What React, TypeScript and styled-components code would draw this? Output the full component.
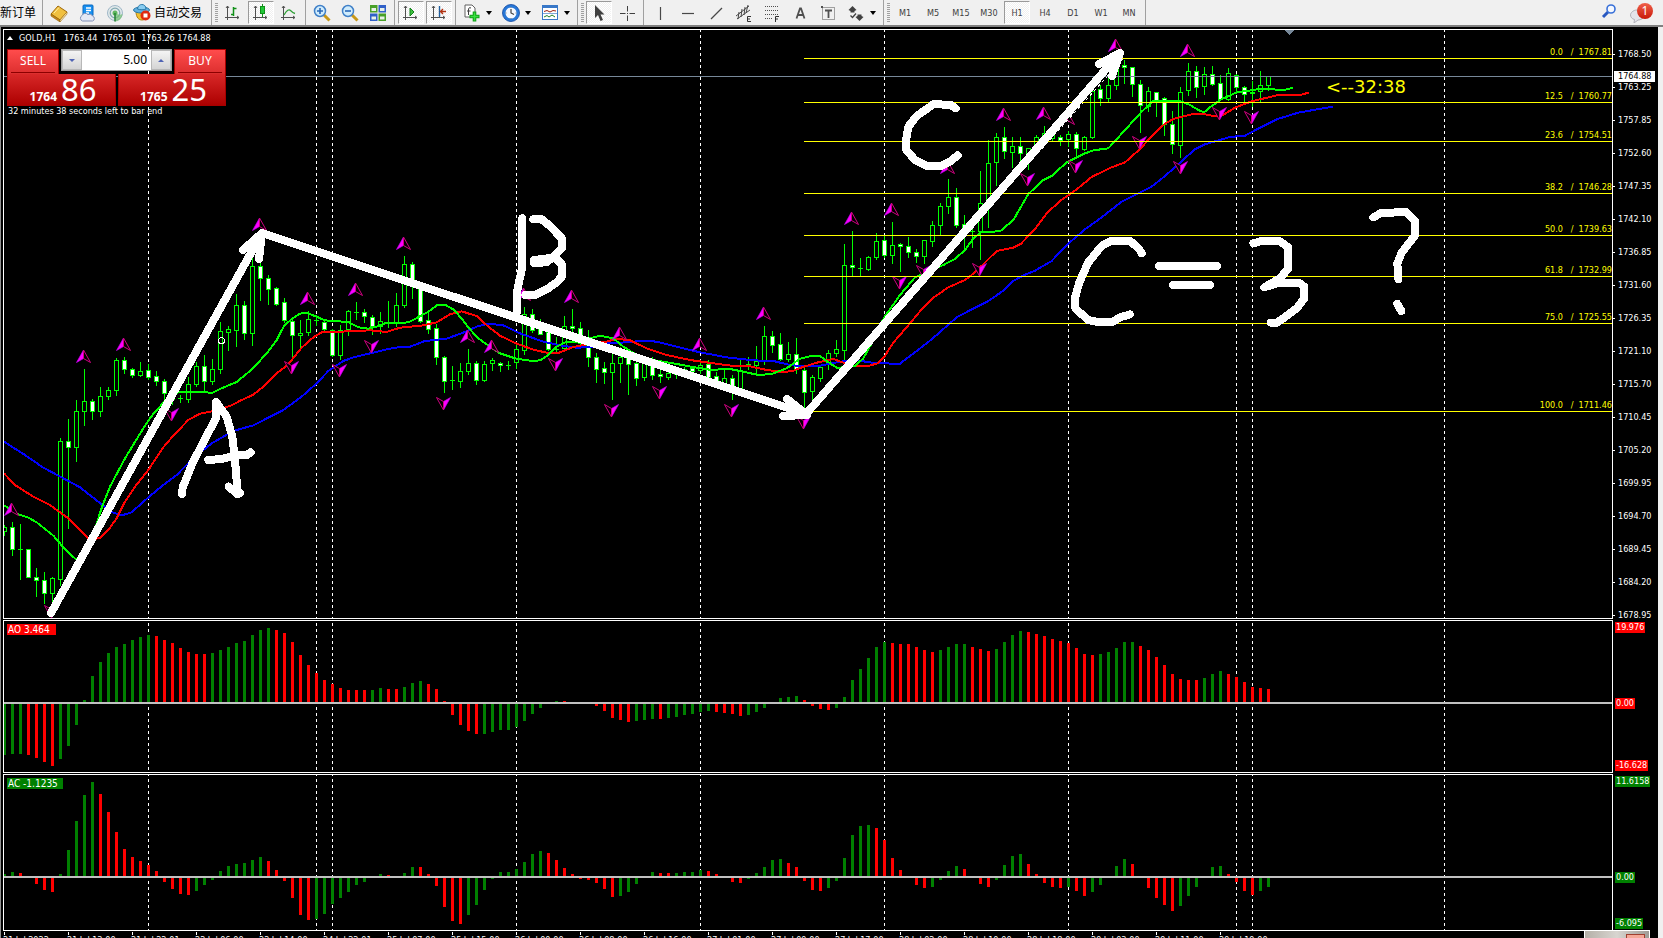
import React from 'react';
import styled, { createGlobalStyle, css } from 'styled-components';

const ui = `"DejaVu Sans Condensed", "DejaVu Sans", "Noto Sans CJK SC", sans-serif`;
const deal = `"Noto Sans", "Open Sans", sans-serif`;
const han = `"Noto Sans CJK SC", "Noto Sans", sans-serif`;

const GlobalStyle = createGlobalStyle`
  * { box-sizing: border-box; }
  body { margin: 0; background: #f0f0f0; font-family: ${ui}; font-size: 9px; line-height: 11px; }
  button, input { font: inherit; margin: 0; padding: 0; border: 0; background: none; color: inherit; }
`;

const Page = styled.div`
  display: flex;
  flex-direction: column;
  height: 100vh;
  overflow: hidden;
`;

/* ---------- toolbar ---------- */

const Toolbar = styled.header`
  display: flex;
  align-items: stretch;
  flex: none;
  height: 27px;
  border-bottom: 2px solid #808080;
  background: #f0f0f0;
  color: #404040;
`;

const Divider = styled.span`
  flex: none;
  width: 1px;
  margin: 0 2px;
  background: #a0a0a0;
`;

const Grip = styled.span`
  flex: none;
  width: 3px;
  margin: 3px 1px;
  background: repeating-linear-gradient(#a0a0a0 0 1px, #f0f0f0 1px 2px);
`;

const Tool = styled.button<{ $pressed?: boolean }>`
  display: flex;
  flex: none;
  align-items: center;
  justify-content: center;
  width: 26px;
  margin: 1px;
  padding-top: 1px;
  border: 1px solid transparent;
  ${(p) =>
    p.$pressed &&
    css`
      border-color: #9a9a9a #fff #fff #9a9a9a;
      background: repeating-conic-gradient(#fff 0 25%, #f0f0f0 0 50%) 0 0 / 2px 2px;
    `}
`;

const DropTool = styled(Tool)`
  width: 37px;
  gap: 5px;
`;

const Caret = styled.span`
  border: 3px solid transparent;
  border-top: 4px solid #000;
  border-bottom: 0;
`;

const TextTool = styled.button<{ $width: number; $indent?: number }>`
  display: flex;
  flex: none;
  align-items: center;
  gap: 3px;
  width: ${(p) => p.$width}px;
  padding-left: ${(p) => p.$indent ?? 0}px;
  padding-bottom: 2px;
  font: 12px/18px ${han};
  color: #000;
  white-space: nowrap;
`;

const ToolbarEnd = styled.div`
  display: flex;
  align-items: center;
  gap: 12px;
  margin-left: auto;
  padding-right: 10px;
`;

const ChatButton = styled.button`
  position: relative;
  display: flex;
  align-items: flex-end;
  width: 24px;
  height: 20px;
`;

const Badge = styled.span`
  position: absolute;
  top: 0;
  right: 0;
  width: 16px;
  height: 16px;
  border-radius: 50%;
  background: linear-gradient(#f0604a, #c81808);
  color: #fff;
  font: 12px/16px ${deal};
  text-align: center;
`;

/* ---------- chart window ---------- */

const Frame = styled.main`
  display: flex;
  flex: 1;
  flex-direction: column;
  gap: 1px;
  min-height: 0;
  margin-right: 5px;
  padding: 2px 0 0 2px;
  border-left: 1px solid #909090;
  background: #000;
  color: #fff;
`;

const Pane = styled.section<{ $height?: number }>`
  display: flex;
  flex: ${(p) => (p.$height ? `0 0 ${p.$height}px` : '1 1 0')};
  min-height: 0;
`;

const Plot = styled.div`
  position: relative;
  flex: 1;
  min-width: 0;
  border: 1px solid #fff;
  overflow: hidden;
`;

const Canvas = styled.svg`
  display: block;
  width: 100%;
  height: 100%;
`;

const FibLabel = styled.text`
  fill: #ffff00;
  text-anchor: end;
  white-space: pre;
`;

const Scale = styled.div`
  flex: 0 0 45px;
  display: flex;
  flex-direction: column;
  align-items: flex-start;
  position: relative;
`;

const PriceList = styled.ul`
  display: flex;
  flex-direction: column;
  gap: 22px;
  margin: 0;
  padding: 20px 0 0;
  list-style: none;
`;

const PriceItem = styled.li`
  display: flex;
  flex: none;
  align-items: center;
  gap: 3px;
  height: 11px;
  &::before {
    content: '';
    width: 2px;
    height: 1px;
    background: #fff;
  }
`;

const BidTag = styled.output`
  position: absolute;
  top: 42px;
  left: 1px;
  width: 41px;
  padding-left: 4px;
  background: #fff;
  color: #000;
`;

const LevelTag = styled.span<{ $color: string }>`
  margin-left: 2px;
  padding: 0 1px;
  background: ${(p) => p.$color};
`;

const Space = styled.span<{ $grow: number }>`
  flex: ${(p) => p.$grow} 0 0;
`;

const IndicatorName = styled.h2<{ $color: string; $width: number }>`
  position: absolute;
  top: 3px;
  left: 3px;
  width: ${(p) => p.$width}px;
  margin: 0;
  padding-left: 1px;
  background: ${(p) => p.$color};
  font-size: 10px;
  font-weight: 400;
`;

const TimeAxis = styled.div`
  display: flex;
  flex: 0 0 6px;
  overflow: hidden;
`;

const TimeLabel = styled.time`
  flex: none;
  width: 64px;
  white-space: nowrap;
  &::before {
    content: '';
    display: block;
    width: 1px;
    height: 3px;
    margin-left: 1px;
    background: #fff;
  }
`;

const Corner = styled.div`
  position: fixed;
  right: 13px;
  bottom: 0;
  display: flex;
  justify-content: flex-end;
  width: 66px;
  height: 8px;
  padding: 3px 4px 0 0;
  border: 1px solid #fff;
  border-bottom: 0;
  background: linear-gradient(90deg, #b5b0a8, #d8d5d0 50%, #a09c96);
`;

const CornerButton = styled.button`
  width: 19px;
  height: 5px;
  border: 1px solid #a04030;
  border-bottom: 0;
  background: #f5a898;
`;

/* ---------- one-click trading ---------- */

const Overlay = styled.div`
  position: absolute;
  top: 1px;
  left: 3px;
  display: flex;
  flex-direction: column;
`;

const Title = styled.h1`
  display: flex;
  align-items: center;
  gap: 6px;
  height: 14px;
  margin: 0 0 4px;
  font-size: 9px;
  font-weight: 400;
  white-space: pre;
`;

const Fold = styled.span`
  border: 3px solid transparent;
  border-bottom: 4px solid #fff;
  border-top: 0;
`;

const Deal = styled.form`
  position: relative;
  display: flex;
  gap: 2px;
  width: 219px;
  font-family: ${deal};
`;

const DealButton = styled.button<{ $side: 'start' | 'end' }>`
  display: flex;
  flex: 1;
  flex-direction: column;
  align-items: flex-${(p) => p.$side};
  color: #fff;
`;

const DealName = styled.span`
  position: relative;
  width: 52px;
  height: 25px;
  border: 1px solid #a80000;
  border-bottom: 0;
  background: linear-gradient(#ff4c4c, #dc2e2e);
  font-size: 12px;
  line-height: 22px;
  text-align: center;
  &::after {
    content: '';
    position: absolute;
    right: 3px;
    bottom: 1px;
    left: 3px;
    height: 1px;
    background: #8c0000;
  }
`;

const DealPrice = styled.span`
  display: flex;
  align-items: baseline;
  justify-content: flex-end;
  gap: 4px;
  width: 100%;
  height: 32px;
  padding-right: 18px;
  border: 1px solid #a80000;
  border-top: 0;
  background: linear-gradient(#d82828, #ac0000);
  font-size: 31px;
  line-height: 31px;
  b { font-size: 12px; }
`;

const Volume = styled.div`
  position: absolute;
  top: 0;
  left: 54px;
  display: flex;
  width: 111px;
  height: 22px;
  border: 1px solid #a0a0a0;
  background: #fff;
  color: #000;
`;

const VolumeInput = styled.input`
  flex: 1;
  min-width: 0;
  padding-right: 4px;
  font-size: 12px;
  line-height: 18px;
  text-align: right;
`;

const Step = styled.button<{ $up?: boolean }>`
  display: flex;
  align-items: center;
  justify-content: center;
  width: 20px;
  border: 1px solid #b8b8b8;
  background: linear-gradient(#f4f4f4, #d4d4d4);
  &::before {
    content: '';
    border: 3px solid transparent;
    ${(p) => (p.$up ? 'border-bottom-color: #5064b4; border-top: 0;' : 'border-top-color: #5064b4; border-bottom: 0;')}
  }
`;

const Countdown = styled.p`
  margin: 0 0 0 1px;
`;

/* ---------- data ---------- */

const barX = (i: number) => 4.5 + 8 * i;

// high, body top, body bottom, low, 1 = bearish (filled)
const candles: number[][] = [
  [525,527,531,535,0],[522,527,549,555,1],[524,549,549,579,0],[549,549,577,577,1],[568,577,580,596,1],
  [572,580,593,603,1],[577,578,593,603,0],[438,441,579,585,0],[419,441,447,528,1],[400,411,447,461,0],
  [369,401,411,425,0],[399,401,411,419,1],[387,396,411,416,0],[387,390,396,399,0],[358,360,390,395,0],
  [357,360,369,373,1],[368,369,375,377,1],[362,371,375,376,0],[364,370,377,379,1],[371,376,381,385,1],
  [379,381,393,399,1],[393,399,399,404,0],[395,398,398,402,0],[377,384,399,402,0],[362,366,384,386,0],
  [355,366,381,390,1],[359,369,381,384,0],[322,331,369,373,0],[326,329,332,350,0],[294,305,330,346,0],
  [301,305,333,339,1],[257,266,333,345,0],[260,266,278,300,1],[275,278,289,304,1],[287,288,304,305,1],
  [298,302,320,322,1],[318,321,335,356,1],[320,333,335,347,0],[311,319,332,335,0],[315,320,320,325,0],
  [320,322,329,330,1],[329,330,355,356,1],[325,330,355,359,0],[310,311,329,335,0],[302,312,312,319,0],
  [309,312,316,322,1],[315,317,326,334,1],[312,321,326,333,0],[301,323,323,327,0],[293,305,323,326,0],
  [256,264,305,307,0],[262,264,281,298,1],[287,288,321,322,1],[312,320,329,333,1],[324,328,357,364,1],
  [356,357,381,392,1],[366,380,380,389,0],[363,371,381,387,0],[349,363,371,374,0],[361,363,380,384,1],
  [361,364,380,381,0],[358,360,363,370,0],[362,363,365,371,1],[361,365,365,369,0],[342,349,362,368,0],
  [307,314,350,354,0],[309,314,330,332,1],[319,323,334,334,1],[328,332,349,350,1],[337,349,349,352,0],
  [316,326,348,350,0],[309,326,328,333,1],[322,328,343,345,1],[330,340,357,366,1],[353,357,369,382,1],
  [362,368,372,383,1],[352,363,372,399,0],[347,357,363,382,0],[355,358,364,394,1],[360,363,378,385,1],
  [362,363,377,380,0],[357,365,375,379,1],[370,374,376,382,1],[368,373,377,379,0],[371,374,374,378,0],
  [367,369,371,372,0],[366,368,371,374,1],[361,365,370,373,0],[360,364,377,379,1],[372,376,384,385,1],
  [369,378,386,388,0],[375,378,391,399,1],[359,370,391,392,0],[357,364,364,369,0],[346,361,365,373,0],
  [326,336,360,364,0],[331,336,345,352,1],[333,344,359,360,1],[342,354,359,361,0],[338,354,369,373,1],
  [367,370,392,411,1],[375,377,391,403,0],[365,367,378,381,0],[350,353,364,369,0],[340,349,353,356,0],
  [244,265,350,360,0],[231,265,267,275,1],[258,268,268,276,0],[256,257,269,270,0],[233,241,257,259,0],
  [235,240,255,257,1],[222,245,255,263,0],[243,244,246,271,1],[237,246,252,257,1],[249,252,256,262,1],
  [240,240,256,263,0],[221,225,241,246,0],[203,206,225,235,0],[179,197,206,213,0],[188,197,225,227,1],
  [215,224,235,249,1],[228,231,231,247,0],[171,203,231,259,0],[140,163,203,227,0],[133,137,162,185,0],
  [127,137,151,158,1],[137,146,152,167,0],[137,146,153,164,1],[148,148,154,169,0],[135,137,147,150,0],
  [126,133,137,140,0],[130,134,138,141,0],[135,137,140,145,1],[131,134,139,146,0],[132,134,148,155,1],
  [136,137,149,150,0],[89,91,137,138,0],[85,89,98,105,1],[78,85,98,102,0],[63,68,85,89,0],
  [60,65,67,83,1],[67,67,84,96,1],[80,84,105,132,1],[87,91,106,111,0],[92,92,100,116,1],
  [97,98,124,135,1],[111,124,144,153,1],[87,92,145,157,0],[63,71,90,95,0],[66,71,87,97,1],
  [67,74,86,94,0],[66,74,84,85,1],[75,83,99,100,1],[68,73,99,100,0],[74,75,87,91,1],
  [86,87,94,103,1],[81,92,93,106,0],[71,85,91,102,0],[76,76,85,90,0],
];

const dayBreaks = [18, 39, 41, 64, 87, 110, 133, 154, 156, 180];

// Oscillator samples in thirds of a pixel, growing downwards.
const ao = [
  435,432,432,435,444,456,468,447,408,345,270,198,156,129,111,102,90,81,75,78,90,99,114,126,132,132,129,120,111,99,
  93,75,60,54,60,69,96,135,165,189,210,222,234,240,240,240,239,234,237,237,231,219,213,222,237,273,315,345,363,372,
  371,366,360,360,351,333,312,294,281,273,274,280,280,281,288,303,324,330,336,333,330,327,328,324,321,315,312,306,
  303,306,309,312,318,315,306,294,280,264,261,258,270,288,297,300,294,261,210,177,144,111,96,99,102,102,111,120,126,
  120,111,102,102,111,117,123,117,96,75,63,66,72,78,87,93,99,114,132,135,132,126,114,96,96,108,120,141,165,192,207,
  210,210,204,192,183,192,201,216,231,234,237,
];
const ac = [
  792,786,789,801,822,840,846,792,720,633,555,516,552,606,666,717,741,753,765,783,816,837,852,855,843,825,810,783,
  768,762,759,750,741,753,780,813,864,915,930,927,912,882,864,846,825,816,801,792,795,801,789,771,772,792,828,891,
  933,942,915,885,840,807,786,786,777,756,732,723,729,750,774,792,807,810,819,837,861,858,846,822,801,786,789,790,
  789,786,786,780,783,792,801,816,819,807,789,771,750,747,759,771,813,840,843,834,813,744,675,648,645,654,690,744,
  780,801,825,834,831,810,783,768,777,801,822,831,810,765,738,732,762,792,819,831,834,831,843,858,846,825,801,768,
  747,762,801,834,864,885,903,888,858,831,801,771,768,792,816,843,855,843,831,
];

// Turns samples taken in thirds of a pixel from an origin into chart points.
const trace = (ox: number, oy: number, samples: string) =>
  samples
    .split(' ')
    .map((pair) => {
      const [x, y] = pair.split(',').map(Number);
      return `${ox + x / 3},${oy + y / 3}`;
    })
    .join(' ');

const averages = [
  {
    color: '#0000ff',
    points: [
      trace(0, 200, '12,725 75,765 130,803 205,843 240,862 310,917 340,938 365,946 395,937 430,905 480,863 530,825 580,774 635,730 700,693 760,676 850,630 905,590 950,550 985,513 1030,483 1060,472 1115,459 1165,447'),
      trace(400, 200, '0,441 30,440 75,423 140,416 190,398 230,380 265,371 310,376 360,400 430,425 480,436 530,443 580,441 620,430 680,427 730,422 770,425 830,440 900,457 980,472 1060,481 1120,483 1170,495'),
      trace(800, 30, '0,1008 60,1007 120,995 170,991 230,1000 300,1001 350,963 395,928 470,862 525,833 565,813 610,782 640,753 670,736 705,722 755,693 800,645 855,598 905,562 965,515 1015,490 1055,470 1095,438'),
      trace(1180, 0, '0,488 20,470 45,448 75,433 150,411 195,407 240,383 290,358 355,338 400,330 458,320'),
    ].join(' '),
  },
  {
    color: '#ff0000',
    points: [
      trace(0, 200, '12,820 45,855 100,890 150,915 205,955 240,990 270,1020 300,1013 325,990 350,955 375,905 405,860 445,810 490,742 520,707 565,660 600,641 640,633 690,618 725,600 760,584 795,556 830,520 865,493 905,443 940,412 965,397 1000,396 1110,391 1160,396'),
      trace(400, 200, '0,383 70,376 110,367 150,343 185,334 230,348 265,380 300,407 345,429 400,449 440,458 475,459 520,441 570,431 620,425 650,416 690,421 740,445 800,465 870,480 940,490 1000,498 1050,499 1090,508 1150,517 1180,512'),
      trace(800, 30, '0,1014 50,998 100,987 130,998 165,1008 205,1008 232,1000 253,980 280,938 330,880 365,838 400,803 445,772 495,750 525,727 590,663 640,653 662,642 705,597 740,550 780,513 830,478 875,441 930,414 975,397 1020,357 1060,313 1095,281 1120,267'),
      trace(1180, 0, '0,352 40,342 75,343 100,348 125,347 165,323 215,304 290,286 360,285 386,278'),
    ].join(' '),
  },
  {
    color: '#00ff00',
    points: [
      trace(0, 200, '12,916 55,943 85,953 110,967 135,987 160,1007 185,1036 205,1057 230,1080 252,1065 275,1020 290,970 308,915 330,860 375,775 430,685 455,648 497,600 535,577 580,576 638,578 662,566 710,546 757,507 800,460 830,420 852,378 875,357 900,341 915,338 935,344 975,361 1045,366 1075,382 1105,386 1130,380 1160,368'),
      trace(400, 200, '0,369 25,367 45,357 85,335 112,315 138,316 163,330 188,360 210,388 235,415 270,440 300,460 345,475 395,483 420,481 445,465 470,440 500,425 545,425 570,415 600,407 640,415 670,440 710,465 760,480 830,492 890,503 935,510 985,506 1030,515 1075,525 1115,522 1160,505 1185,487'),
      trace(800, 30, '0,986 30,979 60,978 90,1000 110,1013 140,1012 165,1008 190,985 215,940 240,885 253,862 300,795 345,742 385,725 430,705 465,687 495,660 520,625 545,606 600,604 640,570 685,492 730,450 755,438 800,397 850,372 880,361 925,355 975,300 1025,245 1060,213 1115,213'),
      trace(1180, 0, '-40,303 0,303 30,315 55,330 72,337 90,322 120,300 170,277 215,271 240,266 310,270 338,264'),
    ].join(' '),
  },
];

const upFractals = [
  [11, 503], [83, 350], [123, 338], [259, 218], [307, 292], [355, 283], [403, 237], [467, 330], [491, 340],
  [523, 288], [571, 290], [619, 327], [699, 338], [763, 307], [851, 212], [891, 203], [947, 161], [1003, 108],
  [1043, 107], [1067, 112], [1115, 39], [1187, 44],
];
const downFractals = [
  [51, 618], [171, 421], [291, 374], [339, 377], [371, 353], [443, 410], [555, 371], [611, 417], [659, 399],
  [731, 417], [803, 429], [899, 289], [923, 278], [979, 276], [1027, 186], [1075, 173], [1139, 149], [1180, 174],
  [1219, 120], [1251, 124],
];

const fibLevels: [string, string, number][] = [
  ['0.0', '1767.81', 58], ['12.5', '1760.77', 102], ['23.6', '1754.51', 141], ['38.2', '1746.28', 193],
  ['50.0', '1739.63', 235], ['61.8', '1732.99', 276], ['75.0', '1725.55', 323], ['100.0', '1711.46', 411],
];

const trendStrokes = [
  '51,613 262,233 806,414 1120,53',
  '243,250 262,233 259,259',
  '787,399 807,415 783,416',
  '1099,64 1120,53 1112,76',
];
const penStrokes = [
  trace(0, 200, '546,882 548,862 575,795 612,722 648,655 648,606 680,650 697,710 705,780 712,870 720,880 712,882 686,860'),
  trace(0, 200, '625,780 665,777 705,767 740,765 752,757'),
  trace(400, 200, '367,55 367,200 352,270 352,335'),
  trace(400, 200, '400,58 425,58 450,78 487,117 487,142 465,165 440,187 402,189 402,180 465,172 487,195 487,228 470,247 440,268 405,285 376,285'),
  trace(800, 30, '467,235 452,224 400,223 350,258 325,290 319,325 319,360 345,390 378,407 425,407 450,395 473,376'),
  trace(800, 30, '1025,670 1018,658 992,634 930,634 905,648 865,697 838,757 826,800 826,836 865,870 890,875 940,875 960,862 990,853'),
  '1159,266 1217,266',
  '1173,285 1210,285',
  trace(1180, 0, '220,730 240,724 300,724 325,742 325,805 300,835 253,862 290,850 360,850 373,860 373,895 350,925 310,955 290,968 272,968'),
  trace(1180, 0, '580,652 605,638 680,637 706,665 706,705 665,758 652,790 655,838'),
  trace(1180, 0, '652,912 664,933'),
];

const prices = [
  '1768.50', '1763.25', '1757.85', '1752.60', '1747.35', '1742.10', '1736.85', '1731.60', '1726.35',
  '1721.10', '1715.70', '1710.45', '1705.20', '1699.95', '1694.70', '1689.45', '1684.20', '1678.95',
];

const times = [
  '21 Jul 2022', '21 Jul 13:00', '21 Jul 22:01', '22 Jul 06:00', '22 Jul 14:00', '24 Jul 22:01', '25 Jul 07:00',
  '25 Jul 15:00', '26 Jul 00:00', '26 Jul 08:00', '26 Jul 16:00', '27 Jul 01:00', '27 Jul 09:00', '27 Jul 17:00',
  '28 Jul 02:00', '28 Jul 10:00', '28 Jul 18:00', '29 Jul 03:00', '29 Jul 11:00', '29 Jul 19:00',
];

/* ---------- chart drawing ---------- */

const DayLines = ({ offset }: { offset: number }) => (
  <g stroke="#fff" strokeDasharray="3 3" strokeDashoffset={offset}>
    {dayBreaks.map((i) => (
      <line key={i} x1={barX(i) - 4} x2={barX(i) - 4} y1="0" y2="100%" />
    ))}
  </g>
);

const Candle = ({ i, c }: { i: number; c: number[] }) => {
  const [high, top, bottom, low, bear] = c;
  const x = barX(i);
  return (
    <>
      <line x1={x} x2={x} y1={high} y2={low + 1} />
      {bottom === top ? (
        <line x1={x - 2.5} x2={x + 2.5} y1={top + 0.5} y2={top + 0.5} />
      ) : (
        <rect x={x - 2} y={top + 0.5} width="4" height={bottom - top} fill={bear ? '#fff' : '#000'} />
      )}
    </>
  );
};

const Fractal = ({ x, y, down }: { x: number; y: number; down?: boolean }) => (
  <g transform={`translate(${x + 0.5} ${y}) rotate(${down ? 180 : 0})`}>
    <path d="M0 0 L-7 12.5 L0 8.5 Z" fill="#ff00ff" stroke="#c000f0" strokeWidth=".7" />
    <path d="M0 0 L7 12.5 L0 8.5 Z" fill="#000" stroke="#d00080" strokeWidth="1" />
  </g>
);

const PriceChart = () => (
  <Canvas role="img" aria-label="GOLD H1 candlestick chart" shapeRendering="crispEdges">
    <DayLines offset={1} />
    <g transform="translate(-4 -30)">
      <path d="M1284 30h10l-5 5z" fill="#778899" />
      <g stroke="#00ff00">
        {candles.map((c, i) => (
          <Candle key={i} i={i} c={c} />
        ))}
      </g>
      {averages.map((a) => (
        <polyline key={a.color} points={a.points} fill="none" stroke={a.color} strokeWidth="2" />
      ))}
      <g shapeRendering="auto">
        {upFractals.map(([x, y]) => (
          <Fractal key={x} x={x} y={y} />
        ))}
        {downFractals.map(([x, y]) => (
          <Fractal key={x} x={x} y={y} down />
        ))}
      </g>
      <line x1="804" y1="411" x2="1124" y2="58" stroke="#fff" strokeDasharray="3 3" />
      <circle cx="221.5" cy="340.5" r="3" fill="none" stroke="#fff" />
    </g>
    {fibLevels.map(([pct, price, y]) => (
      <g key={pct}>
        <line x1="800" x2="100%" y1={y - 29.5} y2={y - 29.5} stroke="#ffff00" />
        <FibLabel x="100%" y={y - 33}>{`${pct}   /  ${price}`}</FibLabel>
      </g>
    ))}
    <line x1="0" x2="100%" y1="46.5" y2="46.5" stroke="#778899" />
    <g transform="translate(-4 -30)">
      <text x="1326" y="93" fill="#ffff00" fontSize="18" fontFamily='"DejaVu Sans", sans-serif'>
        {'<--32:38'}
      </text>
      <g fill="none" stroke="#fff" strokeLinecap="round" strokeLinejoin="round">
        {trendStrokes.map((p) => (
          <polyline key={p} points={p} strokeWidth="8" />
        ))}
        {penStrokes.map((p) => (
          <polyline key={p} points={p} strokeWidth="8" />
        ))}
      </g>
    </g>
  </Canvas>
);

const Histogram = ({ data, base, zero, offset, label }: {
  data: number[];
  base: number;
  zero: number;
  offset: number;
  label: string;
}) => {
  let green = true;
  return (
    <Canvas role="img" aria-label={label} shapeRendering="crispEdges">
      <DayLines offset={offset} />
      {data.map((v, i) => {
        if (i > 0 && v !== data[i - 1]) green = v < data[i - 1];
        const size = Math.round((base - v) / 3);
        return (
          <rect
            key={i}
            x={barX(i) - 5.5}
            y={size > 0 ? zero - size : zero}
            width="3"
            height={Math.abs(size)}
            fill={green ? '#008000' : '#ff0000'}
          />
        );
      })}
      <line x1="0" x2="100%" y1={zero} y2={zero} stroke="#c0c0c0" strokeWidth="2" />
    </Canvas>
  );
};

/* ---------- icons ---------- */

const Icon = ({ children }: { children: React.ReactNode }) => (
  <svg width="18" height="18" viewBox="0 0 18 18" fill="none" aria-hidden="true">
    {children}
  </svg>
);

const Axes = () => <path d="M3.5 2v14M1 13.5h14M2 4l1.500-2 1.500 2M13 12l2 1.500-2 1.500" stroke="#505050" />;

const BookIcon = () => (
  <Icon>
    <path d="M1 10 8 2l9 6-7 8z" fill="#f0c040" stroke="#a06808" />
    <path d="M1 10l9 6v2L1 12z" fill="#c88818" stroke="#8c5c08" strokeWidth=".6" />
    <path d="M10 16l7-8v2l-7 8z" fill="#fff3c0" stroke="#a06808" strokeWidth=".6" />
    <path d="M4 9l5-5.500" stroke="#fff0a0" />
  </Icon>
);
const CloudIcon = () => (
  <Icon>
    <rect x="5" y="1" width="10" height="11" rx="1" fill="#1890f0" stroke="#0868c0" />
    <path d="M8 4h5M8 6.500h5M8 9h3" stroke="#fff" strokeWidth="1.500" />
    <path d="M4.500 17a3 3 0 0 1-.5-5.500 3.500 3.500 0 0 1 6-.8 3 3 0 0 1 4.500 1.300A2.600 2.600 0 0 1 14.500 17z" fill="#e4e8f4" stroke="#8090b8" />
  </Icon>
);
const SignalIcon = () => (
  <Icon>
    <circle cx="9" cy="9" r="7.500" fill="#e0e8ea" stroke="#a0b8c8" />
    <circle cx="9" cy="9" r="4.800" stroke="#80a8b0" strokeWidth="1.200" />
    <circle cx="9" cy="9" r="2.500" fill="#60b860" />
    <path d="M9 9v8.500c4 0 7-3 7.500-7.500-2 1-4 1-7.500-1z" fill="#70c070" fillOpacity=".7" />
    <path d="M9 9v8.500" stroke="#208030" strokeWidth="1.500" />
  </Icon>
);
const AutoIcon = () => (
  <Icon>
    <path d="M3 8c0 7 3 9 6 9s6-2 6-9z" fill="#f0c030" stroke="#b08010" />
    <ellipse cx="8.500" cy="7" rx="8" ry="3" fill="#60b0e0" stroke="#2878a8" />
    <path d="M4.500 6C5 2.500 7 1.500 9 1.500S13 3 13 6c-2 1-6 1-8.500 0z" fill="#88ccf0" stroke="#2878a8" />
    <circle cx="12.500" cy="12.500" r="5" fill="#e02810" />
    <rect x="10.500" y="10.500" width="4" height="4" fill="#fff" />
  </Icon>
);
const BarsIcon = () => (
  <Icon>
    <Axes />
    <path d="M9.500 3v9M9.500 4.500h3M7 10.500h2.500" stroke="#109018" strokeWidth="1.500" />
  </Icon>
);
const CandlesIcon = () => (
  <Icon>
    <Axes />
    <path d="M10.500 0v13" stroke="#109018" />
    <rect x="8.500" y="2.500" width="4" height="7" fill="#20c838" stroke="#109018" />
  </Icon>
);
const LineIcon = () => (
  <Icon>
    <Axes />
    <path d="M4 11c3-5 5-6 6.500-4.500S13 9 15 9.500" stroke="#30a038" strokeWidth="1.300" />
  </Icon>
);
const ZoomIcon = ({ plus }: { plus?: boolean }) => (
  <Icon>
    <path d="M11 11l5.500 5.500" stroke="#c89818" strokeWidth="3" />
    <circle cx="7" cy="7" r="5.500" fill="#d0ecfc" stroke="#4080c8" strokeWidth="1.500" />
    <path d={plus ? 'M4 7h6M7 4v6' : 'M4 7h6'} stroke="#2868b8" strokeWidth="1.600" />
  </Icon>
);
const TilesIcon = () => (
  <Icon>
    <path d="M1 1h7.500v7.500H1zM9.500 9.500H17V17H9.500z" fill="#48a028" />
    <path d="M9.500 1H17v7.500H9.500zM1 9.500h7.500V17H1z" fill="#3060c8" />
    <path d="M2.500 4h4.500v3H2.500zM11 4h4.500v3H11zM2.500 12.500h4.500v3H2.500zM11 12.500h4.500v3H11z" fill="#e8f0e8" />
  </Icon>
);
const ScrollIcon = () => (
  <Icon>
    <Axes />
    <path d="M8 4v8l4-4z" fill="#40c040" stroke="#108018" />
  </Icon>
);
const ShiftIcon = () => (
  <Icon>
    <Axes />
    <path d="M9.500 2v11" stroke="#2060a0" strokeWidth="1.400" />
    <path d="M16 7.500h-5M13 5l-2.500 2.500L13 10" stroke="#b03010" strokeWidth="1.400" />
  </Icon>
);
const IndicatorIcon = () => (
  <Icon>
    <path d="M2 1h7l3 3v9H2z" fill="#fff" stroke="#606060" />
    <path d="M8 4c-2-.8-2.500 0-2.500 2v5M4 7h3.500" stroke="#404040" />
    <path d="M11.500 7.500v10M6.500 12.500h10" stroke="#10a018" strokeWidth="3.600" />
    <path d="M11.500 8.500v8M7.500 12.500h8" stroke="#38e040" strokeWidth="1.500" />
  </Icon>
);
const ClockIcon = () => (
  <Icon>
    <circle cx="9" cy="9" r="7" fill="#f4f8ff" stroke="#2878d8" strokeWidth="3" />
    <circle cx="9" cy="9" r="8.500" stroke="#1048a0" strokeWidth=".8" />
    <path d="M9 5V9l3 1.500" stroke="#404040" strokeWidth="1.200" />
    <path d="M9 3v1M9 14v1M3.500 9h1M13.500 9h1" stroke="#808080" />
  </Icon>
);
const TemplateIcon = () => (
  <Icon>
    <rect x="1.500" y="2.500" width="15" height="13" fill="#fff" stroke="#3878c8" />
    <path d="M1 2.500h16" stroke="#3878c8" strokeWidth="3" />
    <path d="M3 7.500l3-1 3 1.500 3-1.500 3 .5" stroke="#a02010" />
    <path d="M2 9.500h14" stroke="#80a8d8" />
    <path d="M3 13l3-1.500 2 1.500 3-2 3 2" stroke="#208028" />
  </Icon>
);
const PointerIcon = () => (
  <Icon>
    <path d="M5 1v13l3-3 2.500 6 2.500-1-2.500-5.500h4z" fill="#404040" />
  </Icon>
);
const CrossIcon = () => (
  <Icon>
    <path d="M9.500 2v5.500M9.500 11.500V17M2 9.500h5.500M11.500 9.500H17M9 9.500h1" stroke="#404040" />
  </Icon>
);
const StrokeIcon = ({ d }: { d: string }) => (
  <Icon>
    <path d={d} stroke="#484848" strokeWidth="1.200" />
  </Icon>
);
const ChannelIcon = () => (
  <Icon>
    <path d="M1 12L14 2M2 15L15 6M4 8l-1 7M7 5l-1 8M10 3L9 11M13 1l-2 8" stroke="#484848" />
    <path d="M16 12.500h-3.500v5H16M12.500 15H15" stroke="#303030" />
  </Icon>
);
const FiboIcon = () => (
  <Icon>
    <path d="M2 2.500h13M2 6.500h13M2 10.500h13M2 14.500h8" stroke="#505050" strokeDasharray="1 1" />
    <path d="M16 12.500h-3.500V18M12.500 15H15" stroke="#303030" />
  </Icon>
);
const LetterIcon = () => (
  <Icon>
    <path d="M5.500 14.500L9 4.500h1L13.500 14.500M7 11h5" stroke="#505050" strokeWidth="1.800" />
  </Icon>
);
const LabelIcon = () => (
  <Icon>
    <rect x="3.500" y="3.500" width="12" height="12" stroke="#505050" strokeDasharray="1 1" />
    <path d="M6 6.500h7M9.500 6.500v7.500" stroke="#505050" strokeWidth="1.800" />
    <path d="M2 2h2v2H2z" fill="#505050" />
  </Icon>
);
const ArrowsIcon = () => (
  <Icon>
    <path d="M5.500 2L1.500 6l2 1v1.500h4V7l2-1zM12.500 17l4-4-2-1v-1.500h-4V12l-2 1z" fill="#404040" />
    <path d="M3.500 11.500l2 2 3.500-4" stroke="#404040" strokeWidth="1.300" />
  </Icon>
);
const SearchIcon = () => (
  <svg width="16" height="16" viewBox="0 0 16 16" fill="none" aria-hidden="true">
    <path d="M7 9L2 14" stroke="#2858c0" strokeWidth="3" />
    <circle cx="10" cy="6" r="4" fill="#f4f8ff" stroke="#3870d8" strokeWidth="1.600" />
  </svg>
);
const ChatIcon = () => (
  <svg width="18" height="14" viewBox="0 0 18 14" fill="none" aria-hidden="true">
    <path d="M8 1c4 0 7 2 7 5s-3 5-6 5l-4 3 .5-3.500C3 10 1.500 8 1.500 6S4 1 8 1z" fill="#e4e4ea" stroke="#b0b0b8" />
  </svg>
);

const frames = ['M1', 'M5', 'M15', 'M30', 'H1', 'H4', 'D1', 'W1', 'MN'];

export default function App() {
  return (
    <Page>
      <GlobalStyle />
      <Toolbar>
        <TextTool $width={40}>新订单</TextTool>
        <Divider />
        <Tool aria-label="Market"><BookIcon /></Tool>
        <Tool aria-label="Hosting"><CloudIcon /></Tool>
        <Tool aria-label="Signals"><SignalIcon /></Tool>
        <TextTool $width={80} $indent={4}><AutoIcon />自动交易</TextTool>
        <Divider />
        <Grip />
        <Tool aria-label="Bar chart"><BarsIcon /></Tool>
        <Tool $pressed aria-label="Candlesticks"><CandlesIcon /></Tool>
        <Tool aria-label="Line chart"><LineIcon /></Tool>
        <Divider />
        <Tool aria-label="Zoom in"><ZoomIcon plus /></Tool>
        <Tool aria-label="Zoom out"><ZoomIcon /></Tool>
        <Tool aria-label="Tile windows"><TilesIcon /></Tool>
        <Divider />
        <Tool $pressed aria-label="Auto scroll"><ScrollIcon /></Tool>
        <Tool $pressed aria-label="Chart shift"><ShiftIcon /></Tool>
        <Divider />
        <DropTool aria-label="Indicators"><IndicatorIcon /><Caret /></DropTool>
        <DropTool aria-label="Periods"><ClockIcon /><Caret /></DropTool>
        <DropTool aria-label="Templates"><TemplateIcon /><Caret /></DropTool>
        <Divider />
        <Grip />
        <Tool $pressed aria-label="Cursor"><PointerIcon /></Tool>
        <Tool aria-label="Crosshair"><CrossIcon /></Tool>
        <Divider />
        <Tool aria-label="Vertical line"><StrokeIcon d="M9.500 3v13" /></Tool>
        <Tool aria-label="Horizontal line"><StrokeIcon d="M3 9.500h12" /></Tool>
        <Tool aria-label="Trendline"><StrokeIcon d="M4 15L15 4" /></Tool>
        <Tool aria-label="Equidistant channel"><ChannelIcon /></Tool>
        <Tool aria-label="Fibonacci retracement"><FiboIcon /></Tool>
        <Tool aria-label="Text"><LetterIcon /></Tool>
        <Tool aria-label="Text label"><LabelIcon /></Tool>
        <DropTool aria-label="Arrows"><ArrowsIcon /><Caret /></DropTool>
        <Divider />
        <Grip />
        {frames.map((f) => (
          <Tool key={f} $pressed={f === 'H1'}>{f}</Tool>
        ))}
        <Divider />
        <ToolbarEnd>
          <button aria-label="Search"><SearchIcon /></button>
          <ChatButton aria-label="Messages"><ChatIcon /><Badge>1</Badge></ChatButton>
        </ToolbarEnd>
      </Toolbar>

      <Frame>
        <Pane>
          <Plot>
            <PriceChart />
            <Overlay>
              <Title><Fold />{'GOLD,H1   1763.44  1765.01  1763.26 1764.88'}</Title>
              <Deal onSubmit={(e) => e.preventDefault()}>
                <DealButton type="button" $side="start">
                  <DealName>SELL</DealName>
                  <DealPrice><b>1764</b>86</DealPrice>
                </DealButton>
                <DealButton type="button" $side="end">
                  <DealName>BUY</DealName>
                  <DealPrice><b>1765</b>25</DealPrice>
                </DealButton>
                <Volume>
                  <Step type="button" aria-label="Decrease volume" />
                  <VolumeInput aria-label="Volume" defaultValue="5.00" />
                  <Step type="button" $up aria-label="Increase volume" />
                </Volume>
              </Deal>
              <Countdown>32 minutes 38 seconds left to bar end</Countdown>
            </Overlay>
          </Plot>
          <Scale>
            <PriceList>
              {prices.map((p) => (
                <PriceItem key={p}>{p}</PriceItem>
              ))}
            </PriceList>
            <BidTag>1764.88</BidTag>
          </Scale>
        </Pane>

        <Pane $height={153}>
          <Plot>
            <Histogram data={ao} base={279} zero={82} offset={4} label="Awesome Oscillator" />
            <IndicatorName $color="#ff0000" $width={49}>AO 3.464</IndicatorName>
          </Plot>
          <Scale>
            <Space $grow={2} />
            <LevelTag $color="#ff0000">19.976</LevelTag>
            <Space $grow={65} />
            <LevelTag $color="#ff0000">0.00</LevelTag>
            <Space $grow={51} />
            <LevelTag $color="#ff0000">-16.628</LevelTag>
            <Space $grow={2} />
          </Scale>
        </Pane>

        <Pane $height={157}>
          <Plot>
            <Histogram data={ac} base={801} zero={102} offset={2} label="Accelerator Oscillator" />
            <IndicatorName $color="#008000" $width={56}>AC -1.1235</IndicatorName>
          </Plot>
          <Scale>
            <Space $grow={2} />
            <LevelTag $color="#008000">11.6158</LevelTag>
            <Space $grow={85} />
            <LevelTag $color="#008000">0.00</LevelTag>
            <Space $grow={35} />
            <LevelTag $color="#008000">-6.095</LevelTag>
            <Space $grow={2} />
          </Scale>
        </Pane>

        <TimeAxis>
          {times.map((t) => (
            <TimeLabel key={t}>{t}</TimeLabel>
          ))}
        </TimeAxis>
      </Frame>
      <Corner><CornerButton aria-label="Close" /></Corner>
    </Page>
  );
}
